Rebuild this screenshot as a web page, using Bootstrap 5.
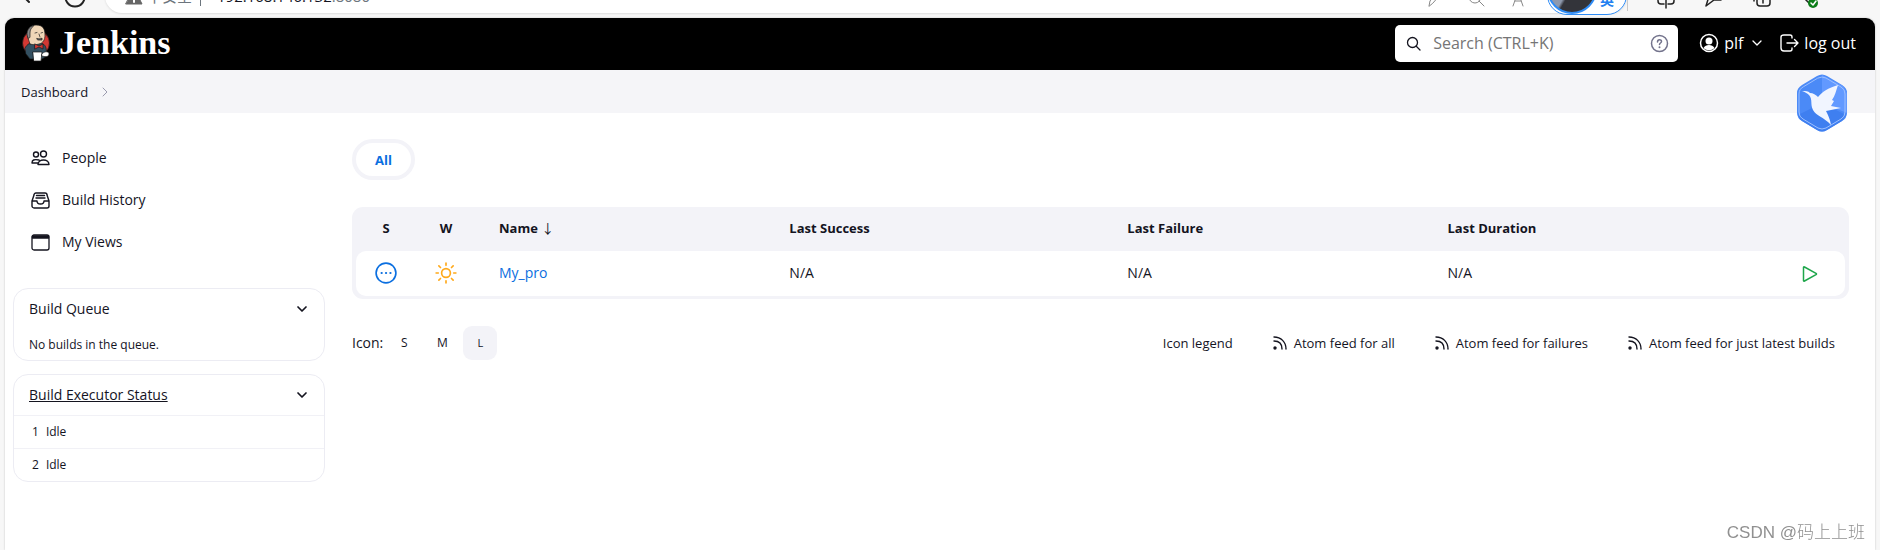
<!DOCTYPE html>
<html lang="en">
<head>
<meta charset="utf-8">
<meta name="viewport" content="width=device-width, initial-scale=1">
<title>Dashboard [Jenkins]</title>
<link href="https://cdn.jsdelivr.net/npm/bootstrap@5.3.0/dist/css/bootstrap.min.css" rel="stylesheet">
<style>
:root{--ink:#14141f;--soft:#f3f3f8;--link:#0b6fe0}
body{font-family:"Open Sans","Noto Sans","Noto Sans CJK SC",sans-serif;font-size:14px;line-height:20px;color:var(--ink);background:#f7f7f7;overflow:hidden}
a{color:inherit;text-decoration:none}
svg{display:block;flex:none;fill:none;stroke:currentColor;stroke-linecap:round;stroke-linejoin:round}
.tone-gray{color:#888}.tone-slate{color:#73738c}.tone-pale{color:#9a9aae}
.tone-blue{color:#0b6fe0}.tone-sun{color:#ffa91a}.tone-green{color:#1ea64b}
.chrome{height:18px}
.chrome-row{height:34px;margin-top:-21px}
.address{margin-left:105px;border-radius:17px;background:#fff;box-shadow:0 1px 2px #ddd;font-size:15px;width:1522px;padding:0 20px}
.address-tools{gap:24px;margin-right:80px;padding-top:4px}
.avatar-pill{position:absolute;right:253px;bottom:3px;width:80px;height:40px;padding-bottom:4px;border:1px solid #2f8cf5;border-radius:20px;background:#fff;color:#2380f0}
.avatar-pill span{width:50px;height:50px;margin:-12px 3px 0 -1px;border:2px solid #2f8cf5;border-radius:50%;background:linear-gradient(120deg,#8e99ad 45%,#33343a 50%)}
.tools{color:#222;gap:28px;margin-right:60px;padding-top:6px}
.tools-rule{width:1px;height:24px;background:#c8c8c8}
.window{margin:0 5px;background:#fff;border-radius:9px 9px 0 0;box-shadow:0 0 2px #bbb;min-height:calc(100vh - 18px)}
.topbar{background:#000;height:52px;border-radius:9px 9px 0 0;color:#fff;font-size:16px;padding:0 19px 2px 16px}
.brand{font-family:"Liberation Serif",serif;font-weight:700;font-size:34px;line-height:32px}
.finder{width:283px;height:37px;border-radius:5px;background:#fff;padding:0 9px 0 11px;color:var(--ink);gap:12px}
.finder input{border:0;outline:0;min-width:0;font-size:16px;background:none;padding:0}
.finder input::placeholder{color:#757575;opacity:1}
.crumbs{height:43px;background:#f5f5f8;padding:0 16px;font-size:13px;gap:14px}
.mascot{position:absolute;right:27px;top:4px;stroke:none}
.side{width:320px;padding:24px 0 0 8px}
.task{height:42px;padding-left:18px;gap:12px}
.pane{border:1px solid #ececf3;border-radius:15px;margin-bottom:13px}
.pane-set{padding-top:25px}
.pane-head{padding:0 16px 0 15px;height:40px}
.pane button,.plain{border:0;background:none;padding:0;color:inherit}
.pane-line{border-top:1px solid #f1f1f6;height:33px;padding:0 18px;font-size:12px;gap:7px}
.pane-note{font-size:12px;padding:6px 15px 5px}
.main-col{padding:26px 26px 0 27px}
.tab-all{border:4px solid var(--soft);border-radius:21px;width:63px;height:41px;color:var(--link);font-weight:700;font-size:13px;background:#fff;padding:0}
.jobs{margin-top:27px;background:var(--soft);border-radius:11px;padding:0 4px 3px}
.jobs table{width:100%;table-layout:fixed;border-collapse:separate;border-spacing:0}
.jobs th{height:44px;font-size:13px;font-weight:700;padding:0 0 3px 23px}
.jobs td{height:45px;background:#fff;padding:0 0 1px 23px}
.jobs td:first-child{border-radius:10px 0 0 10px}
.jobs td:last-child{border-radius:0 10px 10px 0}
.jobs .glyph{padding-left:0;text-align:center}
.c-icon{width:60px}.c-run{width:70px}.c-name{width:19.500%}.c-ok{width:22.700%}.c-bad{width:21.500%}
.jobs svg{display:inline-block}
.job-link{color:var(--link)}
.under{margin-top:27px}
.sizes button{width:34px;height:34px;font-size:12px;border-radius:9px}
.sizes .picked{background:var(--soft);font-size:11px}
.feeds{gap:40px;font-size:13px;padding-right:14px}
.feeds a{gap:7px}
.credit{position:fixed;right:15px;bottom:5px;font-family:"Liberation Sans","Noto Sans CJK SC",sans-serif;font-weight:300;font-size:17px;line-height:24px;color:#909090}
</style>
</head>
<body>
<div class="chrome position-relative overflow-hidden">
  <div class="chrome-row d-flex align-items-center position-relative">
    <div class="address h-100 d-flex align-items-center position-relative">
      <svg width="18" height="18" viewBox="0 0 18 18"><path d="M9 1 17 17H1Z" fill="#666" stroke="#666"/><path d="M9 12v3" stroke="#fff" stroke-width="2"/></svg>
      <span class="ms-1 text-secondary">不安全</span>
      <span class="border-start border-secondary ms-2 ps-3">192.168.146.132<span class="text-secondary">:8080</span></span>
      <div class="address-tools tone-gray ms-auto d-flex align-items-center">
        <svg width="18" height="18" viewBox="0 0 18 18"><path d="m4 17 1-5 7-9 3 3-7 8Z"/></svg>
        <svg width="18" height="18" viewBox="0 0 18 18"><circle cx="8" cy="8" r="6"/><path d="m12 12 5 5"/></svg>
        <svg width="18" height="18" viewBox="0 0 18 18"><path d="m4 17 5-14 5 14M6 12h6"/></svg>
      </div>
    </div>
    <div class="tools ms-auto d-flex align-items-center">
      <span class="tools-rule me-n2"></span>
      <svg width="20" height="20" viewBox="0 0 20 20" stroke-width="1.500"><path d="M8 4H5q-3 0-3 3v5q0 3 3 3h3M12 4h3q3 0 3 3v5q0 3-3 3h-3M10 1v18"/></svg>
      <svg width="20" height="20" viewBox="0 0 20 20" stroke-width="1.500"><path d="M6 4 2 17l8-6h7"/></svg>
      <svg width="20" height="20" viewBox="0 0 20 20" stroke-width="1.500"><rect x="5" y="4" width="13" height="13" rx="3"/><path d="M2 12V4M11 8v6"/></svg>
      <svg width="20" height="20" viewBox="0 0 20 20" stroke-width="1.500"><path d="m2 7 9 9"/><circle cx="13" cy="14" r="5" fill="#0b7d18" stroke="none"/><path d="m11 14 2 2 3-4" stroke="#fff"/></svg>
    </div>
  </div>
  <div class="avatar-pill d-flex"><span></span><b class="align-self-end">英</b></div>
  <svg class="position-absolute top-0 start-0" width="90" height="18"><path d="m21-6 8 8M66-6a9.500 9.500 0 1 0 18 0" stroke="#222" stroke-width="2"/></svg>
</div>

<div class="window">
  <header class="topbar d-flex align-items-center">
    <a href="#" class="d-flex align-items-center gap-2">
      <svg width="30" height="38" viewBox="0 0 30 38" stroke-width=".7">
        <g stroke="#1b1b1b">
        <ellipse cx="15" cy="19" rx="13.500" ry="13" fill="#d33833"/>
        <path d="M4 24c2-4 6-6 11-6s9 2 10 6l1 8-5 3H9l-4-5Z" fill="#335061"/>
        <path d="M9 20 7 14C5 7 9 1 15 1c7 0 9 4 9 10 0 5-2 8-6 9-3 1-6 1-9 0Z" fill="#f0d6b7"/>
        <path d="M7 14C4 8 8 2 13 1.500 10 4 9 6 9 9v4Z" fill="#8c8a8a"/>
        <path d="m14 9 2-.5M20 9l1.500-.5M18 10l1 3M16 14.500c2 .5 4 .5 5-.5v2h-4Z" fill="#6d6b6d"/>
        <path d="m14 20 4 2 4-2v5l-4-2-4 2Z" fill="#d33833"/>
        <path d="M12 28h9l-1 9h-7Z" fill="#fff"/>
        <path d="M21 30c2-3 7-3 7 0s-4 3-7 2Z" fill="#fff"/>
        </g>
      </svg>
      <span class="brand">Jenkins</span>
    </a>
    <label class="finder ms-auto d-flex align-items-center" for="find">
      <svg width="15" height="15" viewBox="0 0 15 15" stroke-width="1.300"><circle cx="6.500" cy="6.500" r="5"/><path d="m10.500 10.500 3.500 3.500"/></svg>
      <input id="find" type="text" class="flex-fill" placeholder="Search (CTRL+K)" aria-label="Search">
      <svg class="tone-slate" width="19" height="19" viewBox="0 0 19 19" stroke-width="1.500"><circle cx="9.500" cy="9.500" r="8"/><path d="M7.500 8c0-3 4-3 4-.5 0 1.500-2 1.500-2 3"/><path d="M9.500 13.200v.1" stroke-width="2"/></svg>
    </label>
    <a href="#" class="d-flex align-items-center ms-3 ps-1">
      <svg width="22" height="20" viewBox="0 0 22 20" stroke-width="1.500"><circle cx="11" cy="10" r="8.500"/><circle cx="11" cy="8" r="3.500" fill="#fff" stroke="none"/><path d="M5.500 15c2-4 9-4 11 0-3 3-8 3-11 0Z" fill="#fff" stroke="none"/></svg>
      <span class="ms-1">plf</span>
      <svg class="ms-2" width="12" height="12" viewBox="0 0 12 12" stroke-width="1.300"><path d="m2 4 4 4 4-4"/></svg>
    </a>
    <a href="#" class="d-flex align-items-center ms-3 gap-1">
      <svg width="21" height="20" viewBox="0 0 21 20" stroke-width="1.400"><path d="M13 5V4c0-1.500-1-2-2-2H5C3 2 2 3 2 4v11c0 2 1 3 3 3h6c1 0 2-1 2-2v-1M8 10h11M15.500 6.500 19 10l-3.500 3.500"/></svg>
      <span>log out</span>
    </a>
  </header>

  <nav class="crumbs position-relative d-flex align-items-center" aria-label="breadcrumb">
    <a href="#">Dashboard</a>
    <svg class="tone-pale" width="6" height="12" viewBox="0 0 6 12"><path d="m1 2 4 4-4 4"/></svg>
    <svg class="mascot" width="52" height="58" viewBox="0 0 52 58">
      <path d="M21 2q5-3 10 0l15 9q5 3 5 8v20q0 5-5 8l-15 9q-5 3-10 0L6 47q-5-3-5-8V19q0-5 5-8Z" fill="#4b8af7"/>
      <path d="M26 29V1l21 11 4 7v20Z" fill="#6299ff"/><path d="M26 29 2 41q1 4 4 6l15 9q5 3 10 0l15-9 4-6Z" fill="#3f7ff0"/>
      <path d="M22 4q4-2 8 0l15 9q4 2 4 7v18q0 5-4 7l-15 9q-4 2-8 0L7 45q-4-2-4-7V20q0-5 4-7Z" stroke="#9cbfff"/>
      <path d="M6 17c4 0 6 0 8 2 3 0 6 2 8 4 4-5 10-9 20-12-2 6-3 11-6 15l2 1-3 5 10 2-15 3c2 4 4 8 5 14-7-8-15-9-18-15-3-6 0-10-4-15-2-2-4-3-7-4Z" fill="#f1f5ff"/>
    </svg>
  </nav>

  <div class="d-flex">
    <aside class="side flex-shrink-0">
      <a href="#" class="task d-flex align-items-center">
        <svg width="19" height="16" viewBox="0 0 19 16" stroke-width="1.400"><circle cx="5" cy="4.500" r="2.500"/><circle cx="12.500" cy="4" r="3"/><path d="M7 14.500c0-6 11-6 11 0ZM6.500 13H1c0-3 2-4 7-3"/></svg>
        <span>People</span></a>
      <a href="#" class="task d-flex align-items-center">
        <svg width="19" height="17" viewBox="0 0 19 17" stroke-width="1.400"><path d="M1 9 3 3c0-1.500 1-2 2-2h9c1 0 2 .5 2 2l2 6v5c0 1-1 2-2 2H3c-1 0-2-1-2-2ZM1 9h5c0 4 7 4 7 0h5M5.500 3.500h8M5 6h9"/></svg>
        <span>Build History</span></a>
      <a href="#" class="task d-flex align-items-center">
        <svg width="19" height="17" viewBox="0 0 19 17" stroke-width="1.300"><rect x="1" y="1" width="17" height="15" rx="2"/><path d="M1.500 2h16v2h-16Z" fill="#14141f"/></svg>
        <span>My Views</span></a>

      <div class="pane-set">
      <section class="pane">
        <div class="pane-head d-flex align-items-center justify-content-between"><span>Build Queue</span>
          <button type="button" aria-label="Toggle build queue"><svg width="12" height="8" viewBox="0 0 12 8" stroke-width="1.700"><path d="m2 2 4 4 4-4"/></svg></button></div>
        <div class="pane-note">No builds in the queue.</div>
      </section>
      <section class="pane">
        <div class="pane-head d-flex align-items-center justify-content-between"><a href="#" class="text-decoration-underline">Build Executor Status</a>
          <button type="button" aria-label="Toggle executors"><svg width="12" height="8" viewBox="0 0 12 8" stroke-width="1.700"><path d="m2 2 4 4 4-4"/></svg></button></div>
        <div class="pane-line d-flex align-items-center"><span>1</span><span>Idle</span></div>
        <div class="pane-line d-flex align-items-center"><span>2</span><span>Idle</span></div>
      </section>
      </div>
    </aside>

    <main class="main-col flex-fill">
      <button type="button" class="tab-all d-block">All</button>
      <div class="jobs">
        <table>
          <colgroup><col class="c-icon"><col class="c-icon"><col class="c-name"><col class="c-ok"><col class="c-bad"><col><col class="c-run"></colgroup>
          <thead><tr><th class="glyph">S</th><th class="glyph">W</th><th>Name <span class="fw-normal">↓</span></th><th>Last Success</th><th>Last Failure</th><th>Last Duration</th><th></th></tr></thead>
          <tbody><tr>
            <td class="glyph"><svg class="tone-blue" width="22" height="22" viewBox="0 0 20 20" stroke-width="1.500"><circle cx="10" cy="10" r="9"/><path d="M6 10h.1M10 10h.1M14 10h.1" stroke-width="2"/></svg></td>
            <td class="glyph"><svg class="tone-sun" width="22" height="22" viewBox="0 0 20 20" stroke-width="1.500"><circle cx="10" cy="10" r="4"/><path d="M10 1v2M10 17v2M1 10h2M17 10h2M3.500 3.500 5 5M15 15l1.500 1.500M3.500 16.500 5 15M15 5l1.500-1.500"/></svg></td>
            <td><a href="#" class="job-link">My_pro</a></td><td>N/A</td><td>N/A</td><td>N/A</td>
            <td class="glyph"><button type="button" class="plain" aria-label="Build My_pro"><svg class="tone-green" width="16" height="18" viewBox="0 0 16 18" stroke-width="1.500"><path d="M1.500 2.500v13q0 1 1 .5l11.500-6.300q1-.7 0-1.400L2.500 2q-1-.5-1 .5Z"/></svg></button></td>
          </tr></tbody>
        </table>
      </div>
      <div class="under d-flex align-items-center justify-content-between">
        <div class="sizes d-flex align-items-center"><span class="me-1">Icon:</span>
          <button type="button" class="plain">S</button><button type="button" class="plain mx-1">M</button><button type="button" class="plain picked">L</button></div>
        <div class="feeds d-flex align-items-center">
          <a href="#">Icon legend</a>
          <a href="#" class="d-flex align-items-center"><svg width="14" height="14" viewBox="0 0 14 14" stroke-width="1.400"><circle cx="2" cy="12" r="1" fill="currentColor"/><path d="M1 5c5 0 8 3 8 8M1 1c7 0 12 5 12 12"/></svg>Atom feed for all</a>
          <a href="#" class="d-flex align-items-center"><svg width="14" height="14" viewBox="0 0 14 14" stroke-width="1.400"><circle cx="2" cy="12" r="1" fill="currentColor"/><path d="M1 5c5 0 8 3 8 8M1 1c7 0 12 5 12 12"/></svg>Atom feed for failures</a>
          <a href="#" class="d-flex align-items-center"><svg width="14" height="14" viewBox="0 0 14 14" stroke-width="1.400"><circle cx="2" cy="12" r="1" fill="currentColor"/><path d="M1 5c5 0 8 3 8 8M1 1c7 0 12 5 12 12"/></svg>Atom feed for just latest builds</a>
        </div>
      </div>
    </main>
  </div>
</div>
<div class="credit">CSDN @码上上班</div>
<script src="https://cdn.jsdelivr.net/npm/bootstrap@5.3.0/dist/js/bootstrap.bundle.min.js"></script>
</body>
</html>
